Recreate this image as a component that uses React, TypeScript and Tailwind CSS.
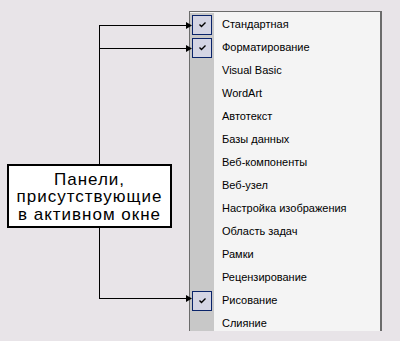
const items = [
  { label: "Стандартная", checked: true },
  { label: "Форматирование", checked: true },
  { label: "Visual Basic" },
  { label: "WordArt" },
  { label: "Автотекст" },
  { label: "Базы данных" },
  { label: "Веб-компоненты" },
  { label: "Веб-узел" },
  { label: "Настройка изображения" },
  { label: "Область задач" },
  { label: "Рамки" },
  { label: "Рецензирование" },
  { label: "Рисование", checked: true },
  { label: "Слияние" },
]

const Check = () => (
  <div className="flex h-[20px] w-[20px] items-center justify-center border border-[#0a246a] bg-[#d4d5e4]">
    <svg width="9" height="8" viewBox="0 0 9 8">
      <path d="M1.5 3.5 L3.5 5.5 L7.5 1.5" fill="none" stroke="#000" strokeWidth="1.4" />
    </svg>
  </div>
)

const MenuRow = ({ label, checked }: { label: string; checked?: boolean }) => (
  <div className="flex h-[23px] items-center">
    <div className="flex h-full w-[24px] shrink-0 items-center justify-center bg-[#c8c8c8]">
      {checked && <Check />}
    </div>
    <span className="pl-[8px] text-[11px] text-black">{label}</span>
  </div>
)

export default function App() {
  return (
    <div
      className="relative flex h-[341px] w-[400px] overflow-hidden bg-[#e8e4e8]"
      style={{ fontFamily: '"Liberation Sans", Arial, sans-serif' }}
    >
      {/* connector lines */}
      <svg className="pointer-events-none absolute left-0 top-0 z-10" width="400" height="341">
        <g stroke="#000" strokeWidth="1" fill="none">
          <path d="M99.5 25 V164 M99.5 228 V298.5" />
          <path d="M99 25.5 H187 M99 48.5 H187 M99 298.5 H187" />
        </g>
        <g fill="#000">
          <path d="M186 22 L192 25.5 L186 29 Z" />
          <path d="M186 45 L192 48.5 L186 52 Z" />
          <path d="M186 295 L192 298.5 L186 302 Z" />
        </g>
      </svg>

      <div className="w-[189px] shrink-0 pl-[7px] pt-[164px]">
        <div className="flex h-[64px] w-[165px] flex-col items-center justify-center border-2 border-black bg-white pt-[2px] text-center text-[17px] font-light leading-[17.5px] tracking-[1px] text-black">
          <span>Панели,</span>
          <span>присутствующие</span>
          <span>в активном окне</span>
        </div>
      </div>

      <div className="mt-[11px] h-[320px] w-[193px] shrink-0 overflow-hidden border-l border-r-2 border-t border-[#6b6b6b] bg-[#f4f4f4] pt-[1px]">
        {items.map((it) => (
          <MenuRow key={it.label} {...it} />
        ))}
      </div>
    </div>
  )
}
